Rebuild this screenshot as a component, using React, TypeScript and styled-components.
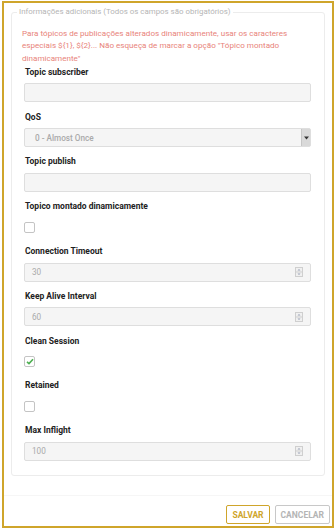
import React from "react";
import styled, { createGlobalStyle } from "styled-components";

const GlobalStyle = createGlobalStyle`
  html, body {
    margin: 0;
    padding: 0;
    background: #fff;
  }
  * {
    box-sizing: border-box;
  }
`;

const gold = "#cfa52b";

const Modal = styled.div`
  width: 332px;
  height: 527px;
  margin: 1px 0 0 2px;
  border: 2px solid ${gold};
  display: flex;
  flex-direction: column;
  font-family: Roboto, "Liberation Sans", sans-serif;
`;

const Body = styled.div`
  flex: 1;
  padding: 3px 7px 0 7px;
`;

const Fieldset = styled.fieldset`
  margin: 0;
  border: 1px solid #ececec;
  border-radius: 3px;
  padding: 0 13px 14px 10px;
`;

const Legend = styled.legend`
  font-size: 7.9px;
  line-height: 12px;
  color: #b5b5b5;
  padding: 0 2px;
  margin-left: -5px;
`;

const Note = styled.p`
  margin: 8.5px 0 2px 0;
  font-size: 8.1px;
  line-height: 12.8px;
  color: #e8837a;
`;

const Group = styled.div`
  padding-left: 2px;
  margin-bottom: 9.3px;

  &:last-child {
    margin-bottom: 0;
  }
`;

const Label = styled.div`
  font-size: 8.5px;
  line-height: 11px;
  font-weight: 700;
  color: #222;
  padding-left: 1px;
  margin-bottom: 5.5px;
`;

const Box = styled.div`
  height: 19px;
  border: 1px solid #dedede;
  border-radius: 2px;
  background: #f5f5f5;
  display: flex;
  align-items: center;
  padding-left: 7px;
  font-size: 8.2px;
  color: #aaa;
`;

const Value = styled.span<{ $bold?: boolean }>`
  flex: 1;
  font-weight: ${(p) => (p.$bold ? 500 : 400)};
  padding-left: ${(p) => (p.$bold ? "3px" : "0")};
`;

const SelectArrow = styled.div`
  width: 9px;
  height: 17px;
  background: #d9d9d9;
  border-left: 1px solid #c6c6c6;
  display: flex;
  align-items: center;
  justify-content: center;
`;

const Spinner = styled.div`
  margin-right: 7px;
  display: flex;
`;

const CheckRow = styled.div`
  height: 19px;
  display: flex;
  align-items: center;
`;

const Check = styled.div`
  width: 11px;
  height: 11px;
  border: 1px solid #c4c4c4;
  border-radius: 2px;
  background: #fff;
  display: flex;
  align-items: center;
  justify-content: center;
`;

const Footer = styled.div`
  border-top: 1px solid #f6f6f6;
  margin-top: 19px;
  padding: 9px 2px 2px 0;
  display: flex;
  justify-content: flex-end;
  gap: 5px;
`;

const Button = styled.button<{ $primary?: boolean }>`
  height: 19px;
  padding: 0 5px;
  background: #fff;
  border: 1px solid ${(p) => (p.$primary ? gold : "#c8c8c8")};
  border-radius: 2px;
  color: ${(p) => (p.$primary ? gold : "#b4b4b4")};
  font-family: Roboto, "Liberation Sans", sans-serif;
  font-weight: 700;
  font-size: 8.5px;
  cursor: pointer;
`;

const SpinIcon = () => (
  <svg width="8" height="10" viewBox="0 0 8 10">
    <rect x="0.5" y="0.5" width="7" height="9" fill="#f0f0f0" stroke="#cfcfcf" />
    <line x1="1" y1="5" x2="7" y2="5" stroke="#cfcfcf" />
    <path d="M2.5 3.6 L4 2 L5.5 3.6 Z" fill="#9aa2b5" />
    <path d="M2.5 6.4 L4 8 L5.5 6.4 Z" fill="#9aa2b5" />
  </svg>
);

const CheckMark = () => (
  <svg width="8" height="7" viewBox="0 0 8 7">
    <path d="M1 3.8 L3 5.6 L7 1.2" fill="none" stroke="#4caf50" strokeWidth="1.6" />
  </svg>
);

const TextField = ({ label }: { label: string }) => (
  <Group>
    <Label>{label}</Label>
    <Box />
  </Group>
);

const NumberField = ({ label, value }: { label: string; value: string }) => (
  <Group>
    <Label>{label}</Label>
    <Box>
      <Value>{value}</Value>
      <Spinner>
        <SpinIcon />
      </Spinner>
    </Box>
  </Group>
);

const CheckField = ({ label, checked }: { label: string; checked?: boolean }) => (
  <Group>
    <Label>{label}</Label>
    <CheckRow>
      <Check>{checked && <CheckMark />}</Check>
    </CheckRow>
  </Group>
);

export default function App() {
  return (
    <>
      <GlobalStyle />
      <Modal>
        <Body>
          <Fieldset>
            <Legend>Informações adicionais (Todos os campos são obrigatórios)</Legend>
            <Note>
              Para tópicos de publicações alterados dinamicamente, usar os caracteres especiais
              ${"{1}"}, ${"{2}"}... Não esqueça de marcar a opção "Tópico montado dinamicamente"
            </Note>
            <TextField label="Topic subscriber" />
            <Group>
              <Label>QoS</Label>
              <Box style={{ paddingRight: 0 }}>
                <Value $bold>0 - Almost Once</Value>
                <SelectArrow>
                  <svg width="5" height="4" viewBox="0 0 5 4">
                    <path d="M0 0.5 H5 L2.5 3.5 Z" fill="#333" />
                  </svg>
                </SelectArrow>
              </Box>
            </Group>
            <TextField label="Topic publish" />
            <CheckField label="Topico montado dinamicamente" />
            <NumberField label="Connection Timeout" value="30" />
            <NumberField label="Keep Alive Interval" value="60" />
            <CheckField label="Clean Session" checked />
            <CheckField label="Retained" />
            <NumberField label="Max Inflight" value="100" />
          </Fieldset>
        </Body>
        <Footer>
          <Button $primary>SALVAR</Button>
          <Button>CANCELAR</Button>
        </Footer>
      </Modal>
    </>
  );
}
